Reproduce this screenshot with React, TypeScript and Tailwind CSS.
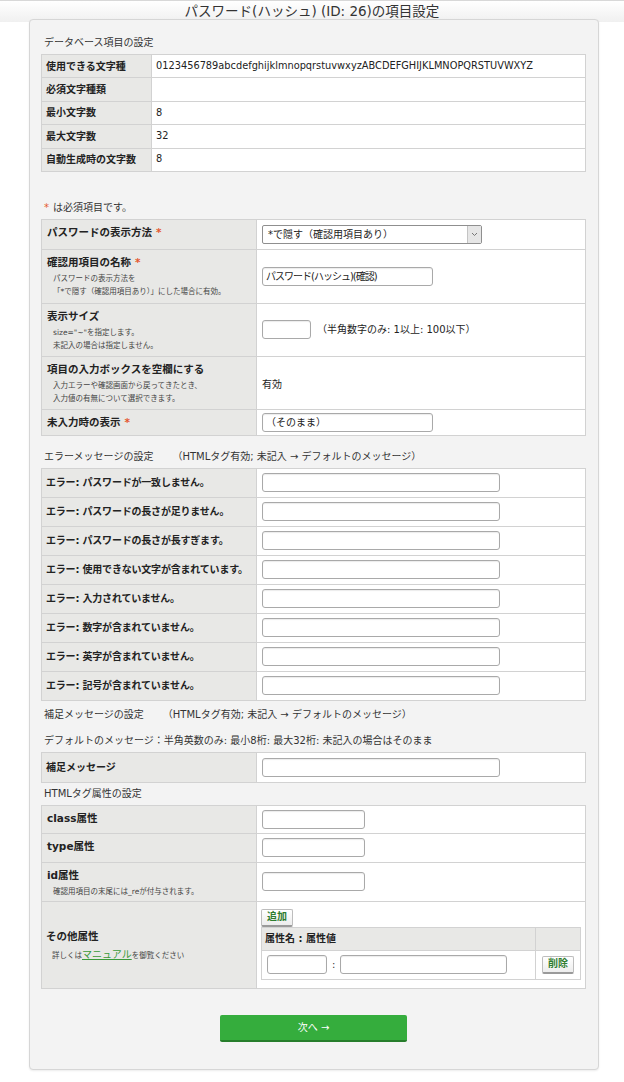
import { ReactNode } from 'react'

const FONT = { fontFamily: '"DejaVu Sans", "Noto Sans CJK JP", sans-serif' }

function Req() {
  return <span className="ml-[4px] text-[#e4572e]">*</span>
}

function TextBox({ w, value = '', tight }: { w: string; value?: string; tight?: boolean }) {
  return (
    <div
      className={`${w} flex h-[19px] items-center rounded-[3px] border border-[#a9a9a9] bg-white px-[3px] text-[10px] text-[#222] shadow-[inset_0_1px_1px_rgba(0,0,0,0.08)] ${tight ? 'tracking-[-1px]' : ''}`}
    >
      {value}
    </div>
  )
}

function Label({ title, req, notes }: { title: string; req?: boolean; notes?: ReactNode[] }) {
  return (
    <td className="w-[215px] border border-[#d2d2d2] bg-[#e8e8e6] px-[5px] pt-[4px] align-top">
      <div className="text-[10.5px] font-bold leading-[16px] text-[#222]">
        {title}
        {req && <Req />}
      </div>
      {notes && (
        <div className="mt-[2px] pl-[6px] text-[7.5px] leading-[13px] text-[#444]">
          {notes.map((n, i) => (
            <div key={i}>{n}</div>
          ))}
        </div>
      )}
    </td>
  )
}

function Row({ h, label, children }: { h: string; label: ReactNode; children: ReactNode }) {
  return (
    <tr className={h}>
      {label}
      <td className="border border-[#d2d2d2] bg-white px-[5px] align-middle">{children}</td>
    </tr>
  )
}

function GrayButton({ children }: { children: ReactNode }) {
  return (
    <span className="inline-flex h-[18px] items-center rounded-[2px] border border-[#bdbdbd] border-b-[2px] border-b-[#9a9a9a] bg-gradient-to-b from-white to-[#ededed] px-[5px] text-[10px] font-bold leading-none text-[#2f7d2f]">
      {children}
    </span>
  )
}

const errors = [
  'エラー: パスワードが一致しません。',
  'エラー: パスワードの長さが足りません。',
  'エラー: パスワードの長さが長すぎます。',
  'エラー: 使用できない文字が含まれています。',
  'エラー: 入力されていません。',
  'エラー: 数字が含まれていません。',
  'エラー: 英字が含まれていません。',
  'エラー: 記号が含まれていません。',
]

const dbRows: [string, string][] = [
  ['使用できる文字種', '0123456789abcdefghijklmnopqrstuvwxyzABCDEFGHIJKLMNOPQRSTUVWXYZ'],
  ['必須文字種類', ''],
  ['最小文字数', '8'],
  ['最大文字数', '32'],
  ['自動生成時の文字数', '8'],
]

export default function App() {
  return (
    <div className="min-h-[1082px] w-[624px] bg-white text-[#333]" style={FONT}>
      {/* Title bar */}
      <div className="flex h-[22px] items-center justify-center border-t border-[#d8d8d8] bg-gradient-to-b from-white to-[#f0f0f0] text-[13.5px] leading-none text-[#333]">
        パスワード(ハッシュ) (ID: 26)の項目設定
      </div>

      <div className="ml-[29px] -mt-[3px] w-[570px] rounded-[4px] border border-[#d6d6d6] bg-[#f3f3f3] pb-[27px] pl-[11px] pr-[12px] pt-[14px] shadow-[0_1px_2px_rgba(0,0,0,0.08)]">
        <div className="mb-[2px] pl-[3px] text-[10px] leading-[18px]">データベース項目の設定</div>
        <table className="w-full border-collapse border border-[#d2d2d2]">
          <tbody>
            {dbRows.map(([k, v]) => (
              <tr key={k} className="h-[23.4px]">
                <td className="w-[110px] border border-[#d2d2d2] bg-[#e8e8e6] px-[4px] text-[10px] font-bold text-[#222]">{k}</td>
                <td className="border border-[#d2d2d2] bg-white px-[4px] text-[9.8px] text-[#222]">{v}</td>
              </tr>
            ))}
          </tbody>
        </table>

        <div className="mb-[2px] mt-[27px] pl-[3px] text-[10px] leading-[18px]">
          <span className="mr-[4px] text-[#e4572e]">*</span>は必須項目です。
        </div>
        <table className="w-full border-collapse border border-[#d2d2d2]">
          <tbody>
            <Row h="h-[30px]" label={<Label title="パスワードの表示方法" req />}>
              <div className="flex h-[19px] w-[220px] items-center justify-between rounded-[2px] border border-[#8f8f8f] bg-white pl-[5px] text-[10px] text-[#222]">
                <span>*で隠す（確認用項目あり）</span>
                <span className="flex h-full w-[14px] items-center justify-center border-l border-[#c4c4c4] bg-[#e6e6e6]">
                  <svg width="7" height="5" viewBox="0 0 7 5" fill="none" stroke="#777" strokeWidth="1">
                    <path d="M1 1l2.5 2.5L6 1" />
                  </svg>
                </span>
              </div>
            </Row>
            <Row
              h="h-[54px]"
              label={
                <Label
                  title="確認用項目の名称"
                  req
                  notes={['パスワードの表示方法を', '「*で隠す（確認用項目あり）」にした場合に有効。']}
                />
              }
            >
              <TextBox w="w-[171px]" value="パスワード(ハッシュ)(確認)" tight />
            </Row>
            <Row
              h="h-[53px]"
              label={<Label title="表示サイズ" notes={['size="~"を指定します。', '未記入の場合は指定しません。']} />}
            >
              <div className="flex items-center gap-[6px] text-[10px] text-[#222]">
                <TextBox w="w-[49px]" />
                <span>（半角数字のみ: 1以上: 100以下）</span>
              </div>
            </Row>
            <Row
              h="h-[53px]"
              label={
                <Label
                  title="項目の入力ボックスを空欄にする"
                  notes={['入力エラーや確認画面から戻ってきたとき、', '入力値の有無について選択できます。']}
                />
              }
            >
              <span className="text-[10px] text-[#222]">有効</span>
            </Row>
            <Row h="h-[26px]" label={<Label title="未入力時の表示" req />}>
              <TextBox w="w-[171px]" value="（そのまま）" />
            </Row>
          </tbody>
        </table>

        <div className="mb-[2px] mt-[12px] flex pl-[3px] text-[10px] leading-[18px]">
          <span>エラーメッセージの設定</span>
          <span className="ml-[19px]">（HTMLタグ有効; 未記入 → デフォルトのメッセージ）</span>
        </div>
        <table className="w-full border-collapse border border-[#d2d2d2]">
          <tbody>
            {errors.map((e) => (
              <tr key={e} className="h-[29px]">
                <td className="w-[215px] whitespace-nowrap border border-[#d2d2d2] bg-[#e8e8e6] px-[4px] text-[10px] font-bold tracking-[-0.2px] text-[#222]">
                  {e}
                </td>
                <td className="border border-[#d2d2d2] bg-white px-[5px]">
                  <TextBox w="w-[238px]" />
                </td>
              </tr>
            ))}
          </tbody>
        </table>

        <div className="mt-[5px] flex pl-[3px] text-[10px] leading-[18px]">
          <span>補足メッセージの設定</span>
          <span className="ml-[19px]">（HTMLタグ有効; 未記入 → デフォルトのメッセージ）</span>
        </div>
        <div className="mb-[2px] mt-[8px] pl-[3px] text-[10px] leading-[18px]">
          デフォルトのメッセージ：半角英数のみ: 最小8桁: 最大32桁: 未記入の場合はそのまま
        </div>
        <table className="w-full border-collapse border border-[#d2d2d2]">
          <tbody>
            <tr className="h-[30px]">
              <td className="w-[215px] border border-[#d2d2d2] bg-[#e8e8e6] px-[4px] text-[10px] font-bold text-[#222]">補足メッセージ</td>
              <td className="border border-[#d2d2d2] bg-white px-[5px]">
                <TextBox w="w-[238px]" />
              </td>
            </tr>
          </tbody>
        </table>

        <div className="mb-[2px] mt-[2px] pl-[3px] text-[10px] leading-[18px]">HTMLタグ属性の設定</div>
        <table className="w-full border-collapse border border-[#d2d2d2]">
          <tbody>
            <Row h="h-[28px]" label={<Label title="class属性" />}>
              <TextBox w="w-[103px]" />
            </Row>
            <Row h="h-[29px]" label={<Label title="type属性" />}>
              <TextBox w="w-[103px]" />
            </Row>
            <Row h="h-[39px]" label={<Label title="id属性" notes={['確認用項目の末尾には_reが付与されます。']} />}>
              <TextBox w="w-[103px]" />
            </Row>
            <tr className="h-[86px]">
              <td className="w-[215px] border border-[#d2d2d2] bg-[#e8e8e6] px-[4px] align-middle">
                <div className="text-[10.5px] font-bold leading-[16px] text-[#222]">その他属性</div>
                <div className="mt-[3px] pl-[6px] text-[7.5px] text-[#444]">
                  詳しくは
                  <span className="text-[10px] text-[#3a9a3a] underline">マニュアル</span>
                  を御覧ください
                </div>
              </td>
              <td className="border border-[#d2d2d2] bg-white px-[4px] pb-[8px] pt-[7px] align-top">
                <div className="flex">
                  <GrayButton>追加</GrayButton>
                </div>
                <table className="w-full border-collapse border border-[#d2d2d2]">
                  <tbody>
                    <tr className="h-[23px] bg-[#e8e8e6]">
                      <td className="border border-[#d2d2d2] px-[3px] text-[10px] font-bold text-[#222]">属性名 : 属性値</td>
                      <td className="w-[45px] border border-[#d2d2d2]" />
                    </tr>
                    <tr className="h-[29px] bg-white">
                      <td className="border border-[#d2d2d2] px-[5px]">
                        <div className="flex items-center gap-[5px] text-[10px]">
                          <TextBox w="w-[60px]" />
                          <span>:</span>
                          <TextBox w="w-[167px]" />
                        </div>
                      </td>
                      <td className="border border-[#d2d2d2] text-center">
                        <div className="flex justify-center">
                          <GrayButton>削除</GrayButton>
                        </div>
                      </td>
                    </tr>
                  </tbody>
                </table>
              </td>
            </tr>
          </tbody>
        </table>

        <div className="mt-[26px] flex justify-center">
          <button className="flex h-[27px] w-[187px] items-center justify-center rounded-[2px] border-b-[2px] border-b-[#267d2b] bg-[#35ad3d] text-[10px] text-white">
            次へ →
          </button>
        </div>
      </div>
    </div>
  )
}
